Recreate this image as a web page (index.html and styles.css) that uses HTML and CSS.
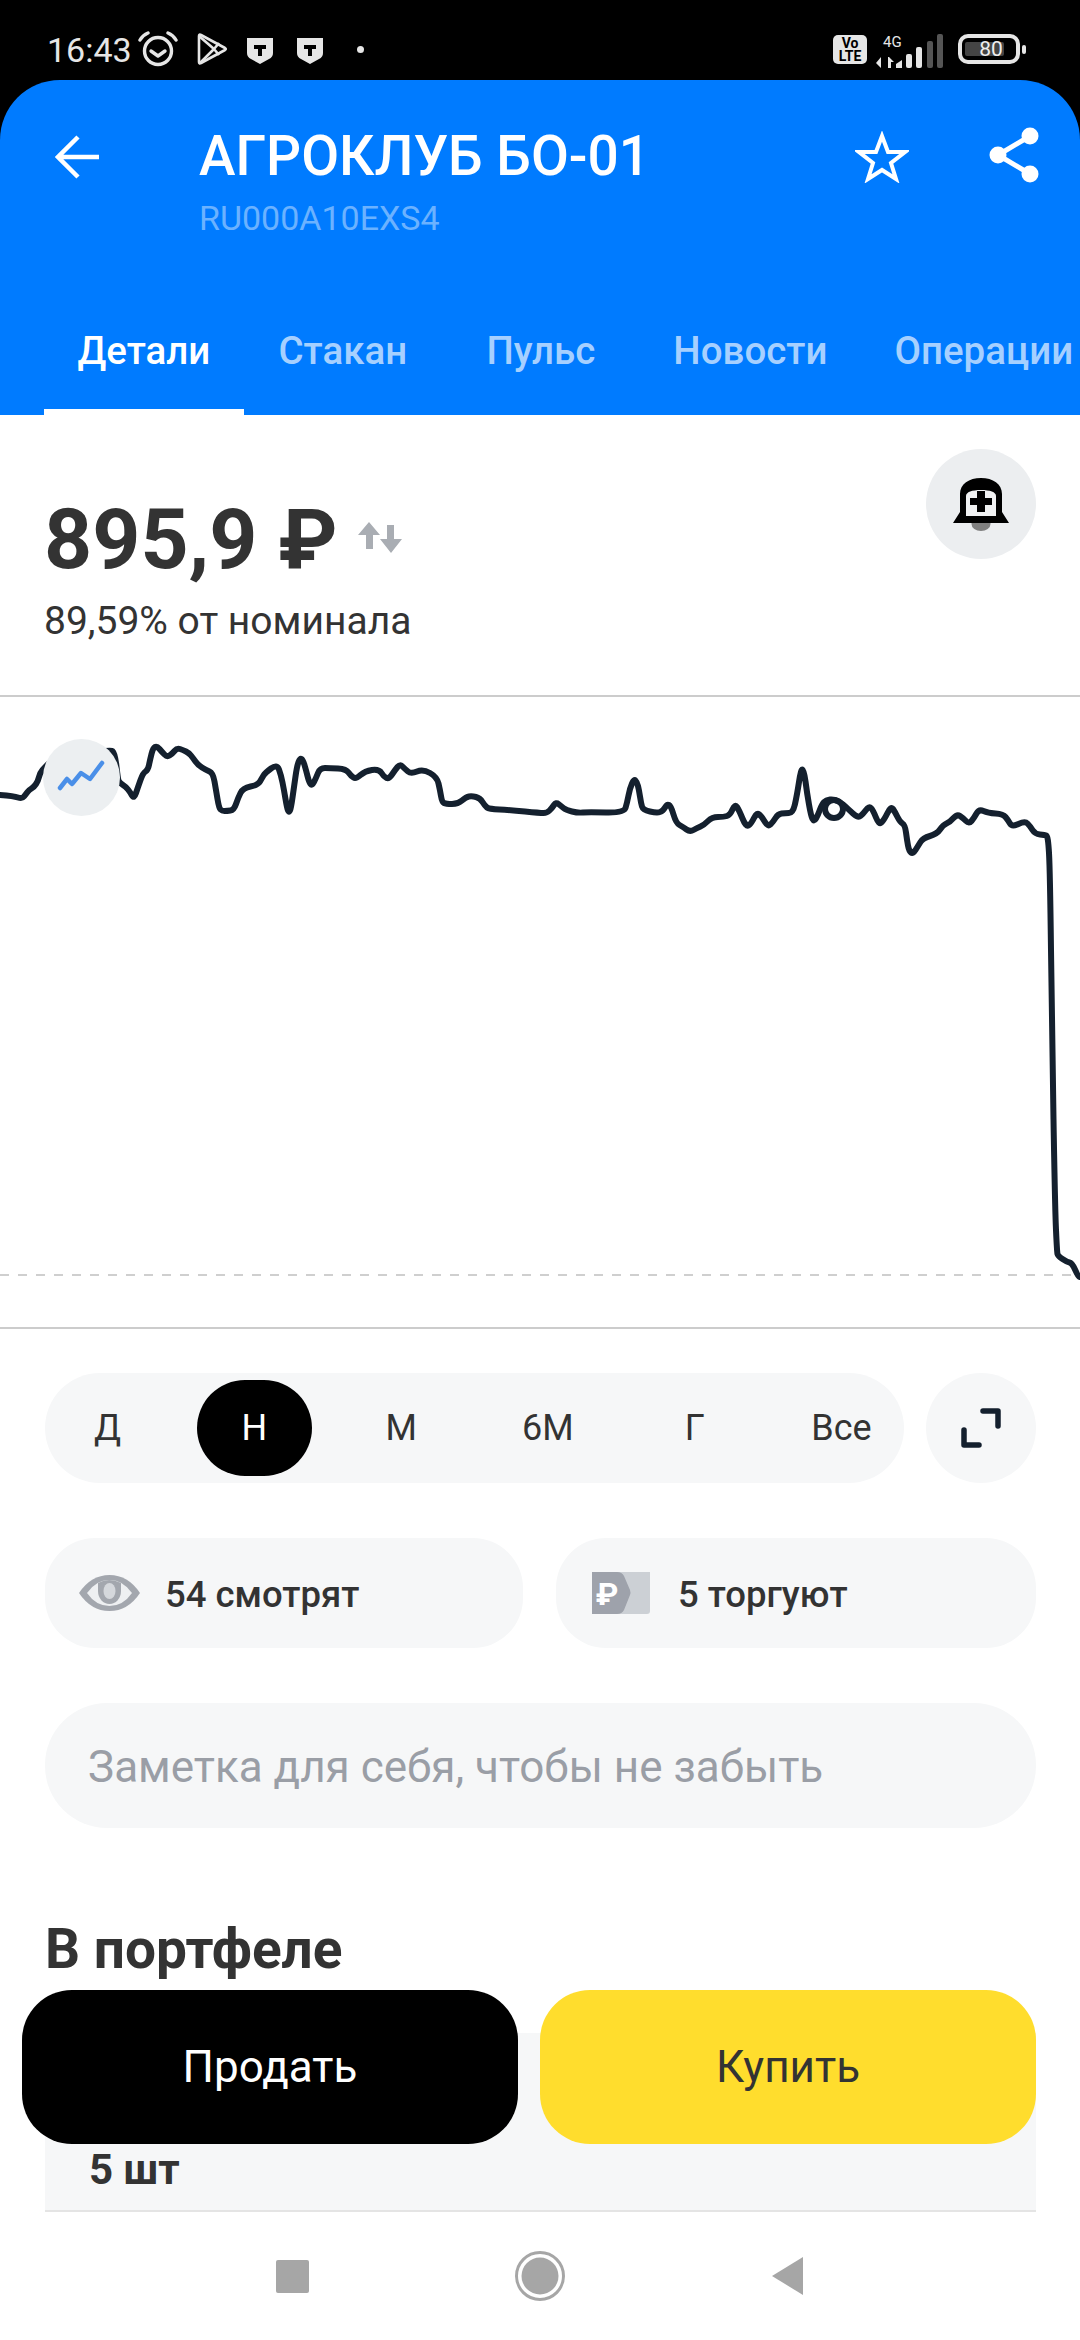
FILE: index.html
```html
<!DOCTYPE html>
<html lang="ru">
<head>
  <meta charset="UTF-8">
  <title>АГРОКЛУБ БО-01</title>
  <link rel="stylesheet" href="styles.css">
</head>
<body>
  <div class="page">
    <div class="status-bar">
      <div class="status-left">
        <span class="clock">16:43</span>
        <svg class="ic-alarm" width="40" height="36" viewBox="0 0 40 36" fill="none" stroke="#e6e6e6" stroke-width="3.4" stroke-linecap="round" stroke-linejoin="round">
          <circle cx="20" cy="20" r="13.5"/>
          <path d="M13 20l7 5 7-5"/>
          <path d="M2 9q3-5 8-7M38 9q-3-5-8-7"/>
        </svg>
        <svg class="ic-play" width="30" height="32" viewBox="0 0 30 32" fill="none" stroke="#e6e6e6" stroke-width="2.6" stroke-linejoin="round">
          <path d="M2 3q0-2 2-1l24 13q1.500 1 0 2L4 30q-2 1-2-1z"/>
          <path d="M2 3l15 13L3 30M17 16l5-6M17 16l5 6"/>
        </svg>
        <svg class="ic-shield" width="26" height="26" viewBox="0 0 26 26">
          <path d="M0 0h26v15q0 4-4 6l-9 5-9-5q-4-2-4-6z" fill="#e6e6e6"/>
          <path d="M7 7h12v4h-4v7h-4v-7H7z" fill="#000"/>
        </svg>
        <svg class="ic-shield" width="26" height="26" viewBox="0 0 26 26">
          <path d="M0 0h26v15q0 4-4 6l-9 5-9-5q-4-2-4-6z" fill="#e6e6e6"/>
          <path d="M7 7h12v4h-4v7h-4v-7H7z" fill="#000"/>
        </svg>
        <span class="status-dot"></span>
      </div>
      <div class="status-right">
        <div class="volte">Vo<br>LTE</div>
        <svg class="ic-signal" width="68" height="34" viewBox="0 0 68 34">
          <text class="signal-label" x="7" y="13">4G</text>
          <path d="M5 23v11l-5-5zM8 23v11M12 23h1l5 5h-3v6h-3z" fill="#e6e6e6"/>
          <path d="M20 30l6-4v8h-6z" fill="#e6e6e6"/>
          <rect x="30" y="20" width="6" height="14" rx="2" fill="#e6e6e6"/>
          <rect x="40" y="13" width="6" height="21" rx="2" fill="#e6e6e6"/>
          <rect x="51" y="7" width="6" height="27" rx="2" fill="#555"/>
          <rect x="61" y="0" width="6" height="34" rx="2" fill="#555"/>
        </svg>
        <div class="battery">
          <div class="battery-body"><span class="battery-fill"></span><span class="battery-num">80</span></div>
          <span class="battery-nub"></span>
        </div>
      </div>
    </div>

    <div class="app-header">
      <div class="header-row">
        <svg class="ic-back" width="44" height="44" viewBox="0 0 44 44" fill="none" stroke="#fff" stroke-width="4.500">
          <path d="M44 22H3M23 2L3 22l20 20"/>
        </svg>
        <div class="title-block">
          <div class="title">АГРОКЛУБ БО-01</div>
          <div class="isin">RU000A10EXS4</div>
        </div>
        <svg class="ic-star" width="54" height="52" viewBox="0 0 54 52" fill="none" stroke="#fff" stroke-width="4">
          <path d="M27 5l6 16h17l-14 11 5 16-14-9-14 9 5-16L4 21h17z"/>
        </svg>
        <svg class="ic-share" width="50" height="56" viewBox="0 0 50 56" fill="#fff" stroke="#fff">
          <path d="M41 9L9 28l32 19" fill="none" stroke-width="5"/>
          <circle cx="41" cy="9" r="8.500" stroke="none"/>
          <circle cx="9" cy="28" r="8.500" stroke="none"/>
          <circle cx="41" cy="47" r="8.500" stroke="none"/>
        </svg>
      </div>
      <div class="tabs">
        <div class="tab tab-active">Детали</div>
        <div class="tab">Стакан</div>
        <div class="tab">Пульс</div>
        <div class="tab">Новости</div>
        <div class="tab">Операции</div>
      </div>
    </div>

    <div class="content">
      <div class="price-section">
        <div class="price-block">
          <div class="price-line">
            <span class="price">895,9 ₽</span>
            <svg class="ic-swap" width="44" height="31" viewBox="0 0 44 31" fill="#a9adb3">
              <path d="M11 0l11 13h-7v14h-7V13H0z"/>
              <path d="M29 3h7v14h8L33 31 22 17h7z"/>
            </svg>
          </div>
          <div class="price-note">89,59% от номинала</div>
        </div>
        <div class="round-btn bell-btn">
          <svg width="56" height="56" viewBox="0 0 56 56">
            <path d="M18.500 45h19v1a9.500 7 0 0 1-19 0z" fill="#808080"/>
            <path d="M0 45l7-11V16C7 6 16 0 28 0s21 6 21 16v18l7 11z" fill="#000"/>
            <path d="M13 38V18c0-4 6-6 15-6s15 2 15 6v20z" fill="#f0f1f2"/>
            <path d="M24 13h8v7h7v7h-7v7h-8v-7h-7v-7h7z" fill="#000"/>
          </svg>
        </div>
      </div>

      <div class="chart">
        <svg class="chart-svg" width="1080" height="630" viewBox="0 697 1080 630" fill="none">
          <path d="M0 1275H1080" stroke="#cfcfcf" stroke-width="2" stroke-dasharray="9 9"/>
          <path id="priceLine" stroke="#14202e" stroke-width="6" stroke-linejoin="round" stroke-linecap="round"/>
          <circle cx="834" cy="809" r="9" stroke="#14202e" stroke-width="6"/>
        </svg>
        <div class="chart-marker">
          <svg width="77" height="77" viewBox="0 0 77 77" fill="none">
            <path d="M17 49l7-9 5 5 9-11 9 6 12-16" stroke="#4a8fe8" stroke-width="4.500" stroke-linecap="round" stroke-linejoin="round"/>
          </svg>
        </div>
      </div>

      <div class="range-row">
        <div class="range-pill">
          <div class="range-item">Д</div>
          <div class="range-item range-active">Н</div>
          <div class="range-item">М</div>
          <div class="range-item">6М</div>
          <div class="range-item">Г</div>
          <div class="range-item">Все</div>
        </div>
        <div class="round-btn expand-btn">
          <svg width="40" height="40" viewBox="0 0 40 40" fill="none" stroke="#14202e" stroke-width="5.500" stroke-linecap="round" stroke-linejoin="round">
            <path d="M22 3h15v15M3 22v15h15"/>
          </svg>
        </div>
      </div>

      <div class="chips">
        <div class="chip chip-watch">
          <svg width="61" height="36" viewBox="0 0 61 36">
            <path d="M0 18Q12 0 30.500 0T61 18Q49 36 30.500 36T0 18z" fill="#a3a7ae"/>
            <path d="M8 18Q17 5 30.500 5T53 18Q44 31 30.500 31T8 18z" fill="#eef0f2"/>
            <path d="M19 8q11-6 23 0v8a11.500 13 0 0 1-23 0z" fill="#a3a7ae"/>
            <ellipse cx="30.500" cy="16" rx="6" ry="8" fill="#d5d8dc"/>
          </svg>
          <span class="chip-text">54 смотрят</span>
        </div>
        <div class="chip chip-trade">
          <svg width="58" height="42" viewBox="0 0 58 42">
            <path d="M20 0h38v39q0 3-3 3H20z" fill="#ccd0d5"/>
            <path d="M0 0h25q5 0 7 4l6 14q1 3 0 5l-6 15q-2 4-7 4H0z" fill="#9ea2ab"/>
            <text class="tag-rub" x="15" y="33">₽</text>
          </svg>
          <span class="chip-text">5 торгуют</span>
        </div>
      </div>

      <div class="note">Заметка для себя, чтобы не забыть</div>

      <h2 class="portfolio-title">В портфеле</h2>
      <div class="portfolio-card">5 шт</div>
    </div>

    <div class="nav-bar">
      <span class="nav-cell"><span class="nav-square"></span></span>
      <span class="nav-cell">
        <svg width="50" height="50" viewBox="0 0 50 50">
          <circle cx="25" cy="25" r="23.500" fill="none" stroke="#a6a6a6" stroke-width="3"/>
          <circle cx="25" cy="25" r="18.500" fill="#a6a6a6"/>
        </svg>
      </span>
      <span class="nav-cell">
        <svg class="nav-back" width="32" height="38" viewBox="0 0 32 38">
          <path d="M31 0v38L0 19z" fill="#a6a6a6"/>
        </svg>
      </span>
    </div>

    <div class="actions">
      <div class="action action-sell">Продать</div>
      <div class="action action-buy">Купить</div>
    </div>
  </div>
  <script src="chart.js"></script>
</body>
</html>
```

FILE: styles.css
```css
* {
  box-sizing: border-box;
}
body {
  margin: 0;
  background: #fff;
  font-family: Roboto, "Noto Sans", sans-serif;
  color: #333;
}
svg {
  display: block;
  flex-shrink: 0;
}
.page {
  position: relative;
  display: flex;
  flex-direction: column;
  width: 1080px;
  height: 2340px;
  overflow: hidden;
  background: #000;
}

/* status bar */
.status-bar {
  display: flex;
  justify-content: space-between;
  align-items: flex-start;
  height: 80px;
  padding: 0 54px 0 47px;
  color: #e6e6e6;
}
.status-left {
  display: flex;
  align-items: flex-start;
  padding-top: 31px;
}
.clock {
  width: 91px;
  font-size: 34px;
  line-height: 38px;
}
.ic-alarm {
  margin-right: 19px;
}
.ic-play {
  margin-top: 2px;
  margin-right: 20px;
}
.ic-shield {
  margin-top: 7px;
  margin-right: 24px;
}
.status-dot {
  width: 7px;
  height: 7px;
  margin: 15px 0 0 10px;
  border-radius: 50%;
  background: #e6e6e6;
}
.status-right {
  display: flex;
  align-items: flex-start;
  padding-top: 34px;
}
.volte {
  width: 34px;
  height: 29px;
  margin-top: 1px;
  margin-right: 9px;
  padding-top: 2px;
  border-radius: 5px;
  background: #e6e6e6;
  color: #000;
  font-size: 14px;
  font-weight: 700;
  line-height: 13px;
  text-align: center;
}
.signal-label {
  fill: #e6e6e6;
  font-family: Roboto, sans-serif;
  font-size: 15px;
}
.ic-signal {
  margin-right: 14px;
}
.battery {
  display: flex;
  align-items: center;
  gap: 2px;
}
.battery-body {
  position: relative;
  width: 62px;
  height: 30px;
  border: 4px solid #e6e6e6;
  border-radius: 10px;
}
.battery-fill {
  position: absolute;
  left: 3px;
  top: 4px;
  width: 39px;
  height: 14px;
  border-radius: 2px;
  background: #444;
}
.battery-num {
  position: absolute;
  left: 0;
  right: 0;
  top: -1px;
  padding-left: 4px;
  text-align: center;
  color: #eee;
  font-size: 21px;
  line-height: 24px;
}
.battery-nub {
  width: 4px;
  height: 9px;
  border-radius: 2px;
  background: #e6e6e6;
}

/* blue header */
.app-header {
  display: flex;
  flex-direction: column;
  justify-content: space-between;
  height: 335px;
  border-radius: 60px 60px 0 0;
  background: #007bff;
}
.header-row {
  display: flex;
  align-items: flex-start;
  padding: 46px 41px 0 55px;
}
.ic-back {
  margin-top: 9px;
}
.title-block {
  flex: 1;
  margin-left: 100px;
}
.title {
  color: #fff;
  font-size: 55px;
  font-weight: 500;
  line-height: 60px;
}
.isin {
  margin-top: 12px;
  color: #6bb2ff;
  font-size: 34px;
  line-height: 40px;
}
.ic-star {
  margin-top: 5px;
  margin-right: 80px;
}
.ic-share {
  margin-top: 1px;
}
.tabs {
  display: flex;
  padding-left: 44px;
  white-space: nowrap;
}
.tab {
  flex-shrink: 0;
  min-width: 198px;
  padding: 0 33.5px 36px;
  border-bottom: 6px solid transparent;
  color: #a6d0ff;
  font-size: 38.5px;
  font-weight: 500;
  line-height: 44px;
  text-align: center;
}
.tab-active {
  border-bottom-color: #fff;
  color: #fff;
}

/* page body */
.content {
  flex: 1;
  overflow: hidden;
  background: #fff;
}
.price-section {
  display: flex;
  justify-content: space-between;
  align-items: flex-start;
  height: 282px;
  padding: 0 44px;
  border-bottom: 2px solid #ccc;
}
.price-block {
  padding-top: 77px;
}
.price-line {
  display: flex;
}
.price {
  font-size: 84px;
  font-weight: 700;
  line-height: 96px;
}
.ic-swap {
  margin: 30px 0 0 20px;
}
.price-note {
  margin-top: 11px;
  font-size: 39px;
  line-height: 44px;
}
.round-btn {
  display: flex;
  align-items: center;
  justify-content: center;
  width: 110px;
  height: 110px;
  border-radius: 50%;
}
.bell-btn {
  margin-top: 34px;
  padding-top: 4px;
  background: #eceef0;
}
.chart {
  position: relative;
  border-bottom: 2px solid #ccc;
}
.chart-marker {
  position: absolute;
  left: 43px;
  top: 42px;
  width: 77px;
  height: 77px;
  border-radius: 50%;
  background: #eceff1;
}
.range-row {
  display: flex;
  gap: 22px;
  margin: 44px 44px 0 45px;
}
.range-pill {
  flex: 1;
  display: flex;
  justify-content: space-between;
  height: 110px;
  padding: 7px 5px;
  border-radius: 55px;
  background: #f6f7f8;
}
.range-item {
  width: 115px;
  height: 96px;
  border-radius: 48px;
  font-size: 36px;
  line-height: 96px;
  text-align: center;
}
.range-active {
  background: #000;
  color: #fff;
}
.expand-btn {
  background: #f6f7f8;
}
.chips {
  display: flex;
  gap: 33px;
  margin: 55px 44px 0 45px;
}
.chip {
  flex: 1;
  display: flex;
  align-items: center;
  height: 110px;
  border-radius: 50px;
  background: #f6f7f8;
  font-size: 36.5px;
  font-weight: 500;
}
.chip-text {
  padding-top: 3px;
}
.chip-watch {
  gap: 25px;
  padding-left: 34px;
}
.chip-trade {
  gap: 28px;
  padding-left: 36px;
}
.tag-rub {
  fill: #fff;
  font-family: Roboto, sans-serif;
  font-size: 32px;
  font-weight: 700;
  text-anchor: middle;
}
.note {
  height: 125px;
  margin: 55px 44px 0 45px;
  padding-left: 43px;
  border-radius: 62px;
  background: #f6f7f8;
  color: #9a9ea6;
  font-size: 44px;
  line-height: 128px;
}
.portfolio-title {
  margin: 91px 45px 0;
  font-size: 55px;
  font-weight: 700;
  line-height: 60px;
}
.portfolio-card {
  height: 179px;
  margin: 54px 44px 0 45px;
  padding: 112px 0 0 44px;
  border-bottom: 2px solid #e4e4e4;
  background: #f6f7f8;
  font-size: 42px;
  font-weight: 700;
  line-height: 50px;
}

/* android nav */
.nav-bar {
  display: grid;
  grid-template-columns: repeat(3, 248px);
  justify-content: center;
  align-items: center;
  height: 128px;
  background: #fff;
}
.nav-cell {
  display: flex;
  justify-content: center;
}
.nav-square {
  width: 33px;
  height: 33px;
  border-radius: 2px;
  background: #a6a6a6;
}

/* floating buy and sell */
.actions {
  position: absolute;
  left: 22px;
  right: 44px;
  bottom: 196px;
  display: flex;
  gap: 22px;
}
.action {
  flex: 1;
  height: 154px;
  border-radius: 50px;
  font-size: 44px;
  line-height: 154px;
  text-align: center;
}
.action-sell {
  background: #000;
  color: #fff;
}
.action-buy {
  background: #ffdd2d;
  color: #333;
}
```

FILE: chart.js
```js
// price history, x and y in page pixels
const points = [
  [0,795],[14,796],[22,799],[26,794],[29,790],[34,787],[38,781],[40,773],[45,767],[50,762],[110,749],[115,753],
  [118,780],[120,783],[126,787],[130,792],[134,799],[138,787],[143,773],[148,770],[150,760],[153,748],[157,746],
  [162,752],[167,757],[172,754],[177,748],[183,750],[189,753],[193,758],[198,765],[206,770],[213,773],[216,790],
  [219,808],[222,811],[227,811],[234,810],[238,798],[243,788],[258,785],[262,778],[265,773],[277,764],[281,775],
  [284,790],[287,808],[289,813],[291,808],[294,787],[297,766],[300,758],[303,760],[306,770],[309,782],[312,786],
  [316,778],[320,768],[330,768],[346,769],[351,776],[356,779],[365,771],[379,769],[384,777],[389,779],[395,770],
  [400,764],[405,769],[411,774],[423,769],[437,777],[440,790],[442,802],[446,804],[458,804],[466,797],[472,796],
  [480,798],[485,806],[489,809],[510,810],[540,813],[547,813],[552,808],[556,802],[561,806],[566,810],[578,813],
  [588,812],[624,813],[627,803],[630,788],[634,779],[637,782],[639,790],[641,803],[643,810],[657,813],[663,811],
  [667,804],[671,806],[676,823],[683,827],[690,832],[697,828],[704,825],[712,817],[724,817],[730,815],[735,804],
  [739,810],[746,827],[751,824],[757,812],[762,817],[768,827],[773,822],[778,814],[785,813],[793,813],[797,795],
  [801,769],[804,770],[807,793],[811,816],[814,822],[818,815],[822,804],[826,800],[834,799],[843,804],[848,809],
  [858,818],[863,814],[869,806],[873,810],[879,825],[884,820],[891,806],[895,812],[900,822],[905,825],[907,840],
  [909,851],[913,854],[918,846],[923,838],[937,834],[943,825],[950,822],[957,814],[963,818],[969,824],[974,818],
  [979,809],[988,813],[1003,814],[1008,820],[1012,827],[1025,821],[1030,826],[1035,834],[1045,835],[1048,836],
  [1050,870],[1052,1030],[1055,1208],[1057,1252],[1058,1256],[1067,1262],[1072,1263],[1078,1276],[1080,1277]
];

// smooth the line through midpoints
let d = `M${points[0][0]} ${points[0][1]}`;
for (let i = 1; i < points.length - 1; i++) {
  const midX = (points[i][0] + points[i + 1][0]) / 2;
  const midY = (points[i][1] + points[i + 1][1]) / 2;
  d += `Q${points[i][0]} ${points[i][1]} ${midX} ${midY}`;
}
d += `L1080 1277`;
document.getElementById('priceLine').setAttribute('d', d);
```
